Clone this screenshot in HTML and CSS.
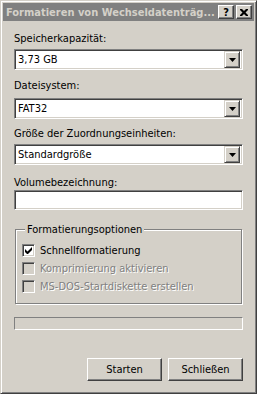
FILE: index.html
```html
<!DOCTYPE html>
<html lang="de">
<head>
    <meta charset="UTF-8">
    <title>Formatieren von Wechseldatenträger</title>
    <link rel="stylesheet" href="styles.css">
</head>
<body>
    <div class="window">
        <div class="titlebar">
            <span class="title">Formatieren von Wechseldatenträg...</span>
            <span class="cap-btn cap-help">?</span>
            <span class="cap-btn cap-close">
                <svg width="8" height="7" viewBox="0 0 8 7"><path d="M0 0h2l2 2 2-2h2v1l-2.5 2.5L8 6v1H6L4 5 2 7H0V6l2.5-2.5L0 1z" fill="#000"/></svg>
            </span>
        </div>

        <div class="content">
            <div class="label l1">Speicherkapazität:</div>
            <div class="combo c1">
                <span class="combo-value">3,73 GB</span>
                <span class="combo-btn"><svg width="7" height="4" viewBox="0 0 7 4"><path d="M0 0h7L3.5 4z" fill="#000"/></svg></span>
            </div>

            <div class="label l2">Dateisystem:</div>
            <div class="combo c2">
                <span class="combo-value">FAT32</span>
                <span class="combo-btn"><svg width="7" height="4" viewBox="0 0 7 4"><path d="M0 0h7L3.5 4z" fill="#000"/></svg></span>
            </div>

            <div class="label l3">Größe der Zuordnungseinheiten:</div>
            <div class="combo c3">
                <span class="combo-value">Standardgröße</span>
                <span class="combo-btn"><svg width="7" height="4" viewBox="0 0 7 4"><path d="M0 0h7L3.5 4z" fill="#000"/></svg></span>
            </div>

            <div class="label l4">Volumebezeichnung:</div>
            <div class="edit"></div>

            <fieldset class="group">
                <legend>Formatierungsoptionen</legend>
                <div class="check">
                    <span class="box"><svg width="7" height="7" viewBox="0 0 7 7"><path d="M0 2v3l2 2h1l4-4V0L2.5 4.5z" fill="#000"/></svg></span>
                    <span>Schnellformatierung</span>
                </div>
                <div class="check disabled">
                    <span class="box"></span>
                    <span>Komprimierung aktivieren</span>
                </div>
                <div class="check disabled">
                    <span class="box"></span>
                    <span>MS-DOS-Startdiskette erstellen</span>
                </div>
            </fieldset>

            <div class="progress"></div>

            <div class="buttons">
                <button class="btn">Starten</button>
                <button class="btn">Schließen</button>
            </div>
        </div>
    </div>
</body>
</html>
```

FILE: styles.css
```css
html, body {
    margin: 0;
    padding: 0;
    background: #d4d0c8;
}

body {
    font-family: 'DejaVu Sans Condensed', 'DejaVu Sans', sans-serif;
    font-size: 11px;
    color: #000;
}

.window {
    width: 257px;
    height: 394px;
    box-sizing: border-box;
    background: #d4d0c8;
    border: 1px solid;
    border-color: #d4d0c8 #404040 #404040 #d4d0c8;
    box-shadow: inset 1px 1px 0 #fff, inset -1px -1px 0 #808080;
    padding: 2px;
    display: flex;
    flex-direction: column;
}

.titlebar {
    height: 18px;
    background: #808080;
    display: flex;
    align-items: center;
    padding: 0 2px 0 3px;
}

.title {
    flex: 1;
    color: #d4d0c8;
    font-weight: bold;
    font-size: 11px;
    white-space: nowrap;
    overflow: hidden;
}

.cap-btn {
    width: 16px;
    height: 14px;
    box-sizing: border-box;
    background: #d4d0c8;
    border: 1px solid;
    border-color: #fff #404040 #404040 #fff;
    box-shadow: inset -1px -1px 0 #808080;
    display: flex;
    align-items: center;
    justify-content: center;
    font-weight: bold;
    font-size: 11px;
    line-height: 1;
}

.cap-help {
    margin-right: 2px;
}

.content {
    padding: 11px 11px 0 11px;
    display: flex;
    flex-direction: column;
}

.label {
    height: 13px;
    line-height: 13px;
    white-space: nowrap;
}

.l1 { margin-bottom: 4px; }
.l2 { margin-top: 9px; margin-bottom: 6px; }
.l3 { margin-top: 8px; margin-bottom: 4px; }
.l4 { margin-top: 11px; margin-bottom: 1px; }

.combo {
    height: 21px;
    box-sizing: border-box;
    background: #fff;
    border: 1px solid;
    border-color: #808080 #fff #fff #808080;
    box-shadow: inset 1px 1px 0 #404040, inset -1px -1px 0 #d4d0c8;
    display: flex;
    align-items: center;
    padding: 2px;
}

.combo-value {
    flex: 1;
    padding-left: 1px;
}

.combo-btn {
    width: 16px;
    height: 17px;
    box-sizing: border-box;
    background: #d4d0c8;
    border: 1px solid;
    border-color: #d4d0c8 #404040 #404040 #d4d0c8;
    box-shadow: inset 1px 1px 0 #fff, inset -1px -1px 0 #808080;
    display: flex;
    align-items: center;
    justify-content: center;
}

.edit {
    height: 20px;
    box-sizing: border-box;
    background: #fff;
    border: 1px solid;
    border-color: #808080 #fff #fff #808080;
    box-shadow: inset 1px 1px 0 #404040, inset -1px -1px 0 #d4d0c8;
}

.group {
    margin: 13px 0 0 1px;
    padding: 5px 6px 4px 6px;
    border: 1px solid #808080;
    box-shadow: inset 1px 1px 0 #fff, 1px 1px 0 #fff;
    width: 227px;
    box-sizing: border-box;
    height: 81px;
}

.group legend {
    padding: 0 2px;
    margin-left: 3px;
    background: #d4d0c8;
    line-height: 13px;
}

.check {
    display: flex;
    align-items: center;
    height: 18px;
    gap: 5px;
}

.box {
    width: 13px;
    height: 13px;
    box-sizing: border-box;
    background: #fff;
    border: 1px solid;
    border-color: #808080 #fff #fff #808080;
    box-shadow: inset 1px 1px 0 #404040, inset -1px -1px 0 #d4d0c8;
    display: flex;
    align-items: center;
    justify-content: center;
}

.disabled {
    color: #808080;
    text-shadow: 1px 1px 0 #fff;
}

.disabled .box {
    background: #d4d0c8;
}

.progress {
    margin-top: 13px;
    height: 13px;
    box-sizing: border-box;
    border: 1px solid;
    border-color: #808080 #fff #fff #808080;
}

.buttons {
    margin-top: 28px;
    display: flex;
    justify-content: flex-end;
    gap: 6px;
}

.btn {
    width: 75px;
    height: 23px;
    box-sizing: border-box;
    font-family: inherit;
    font-size: 11px;
    background: #d4d0c8;
    border: 1px solid;
    border-color: #fff #404040 #404040 #fff;
    box-shadow: inset -1px -1px 0 #808080;
    padding: 0;
    color: #000;
}
```
